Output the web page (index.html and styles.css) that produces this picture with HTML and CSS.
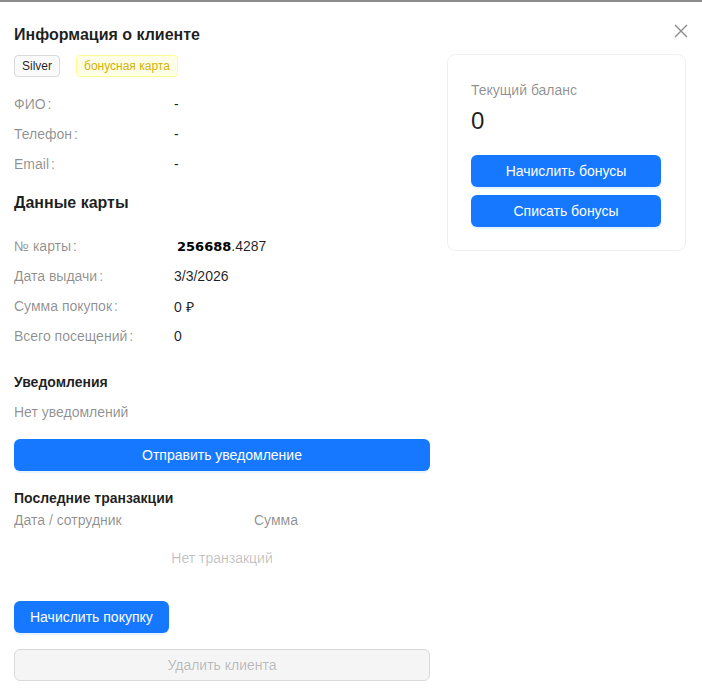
FILE: index.html
```html
<!DOCTYPE html>
<html lang="ru">
<head>
<meta charset="utf-8">
<link rel="stylesheet" href="styles.css">
</head>
<body>
<div class="modal">
  <button class="close" aria-label="close">
    <svg width="14" height="14" viewBox="0 0 14 14"><path d="M1 1L13 13M13 1L1 13" stroke="#8c8c8c" stroke-width="1.4" fill="none"/></svg>
  </button>
  <div class="layout">
    <div class="main">
      <h1 class="title">Информация о клиенте</h1>
      <div class="tags">
        <span class="tag tag-silver">Silver</span>
        <span class="tag tag-gold">бонусная карта</span>
      </div>
      <div class="rows">
        <div class="row"><span class="label">ФИО</span><span class="value">-</span></div>
        <div class="row"><span class="label">Телефон</span><span class="value">-</span></div>
        <div class="row"><span class="label">Email</span><span class="value">-</span></div>
      </div>
      <h2 class="section">Данные карты</h2>
      <div class="rows rows-card">
        <div class="row"><span class="label">№ карты</span><span class="value"><b class="cardnum">256688</b>.4287</span></div>
        <div class="row"><span class="label">Дата выдачи</span><span class="value">3/3/2026</span></div>
        <div class="row"><span class="label">Сумма покупок</span><span class="value">0 ₽</span></div>
        <div class="row"><span class="label">Всего посещений</span><span class="value">0</span></div>
      </div>
      <h3 class="sub">Уведомления</h3>
      <p class="muted">Нет уведомлений</p>
      <button class="btn btn-primary btn-block">Отправить уведомление</button>
      <h3 class="sub sub-tx">Последние транзакции</h3>
      <div class="tx-head"><span class="tx-date">Дата / сотрудник</span><span>Сумма</span></div>
      <div class="empty">Нет транзакций</div>
      <button class="btn btn-primary btn-inline">Начислить покупку</button>
      <button class="btn btn-disabled btn-block" disabled>Удалить клиента</button>
    </div>
    <aside class="card">
      <div class="card-label">Текущий баланс</div>
      <div class="balance">0</div>
      <div class="card-actions">
        <button class="btn btn-primary">Начислить бонусы</button>
        <button class="btn btn-primary">Списать бонусы</button>
      </div>
    </aside>
  </div>
</div>
</body>
</html>
```

FILE: styles.css
```css
* { box-sizing: border-box; }
html, body { margin: 0; padding: 0; background: #fff; }
body {
  font-family: "Liberation Sans", Arial, sans-serif;
  font-size: 14px;
  color: rgba(0,0,0,0.88);
  border-top: 2px solid #8c8c8c;
}
.modal { position: relative; padding: 21px 16px 0 14px; }
.close {
  position: absolute; top: 21px; right: 13px;
  width: 16px; height: 16px; padding: 0; border: 0; background: none;
  display: flex; align-items: center; justify-content: center;
}
.layout { display: flex; gap: 17px; align-items: flex-start; }
.main { width: 416px; display: flex; flex-direction: column; }
.title { margin: 0; font-size: 16px; font-weight: 700; line-height: 24px; color: rgba(0,0,0,0.88); }
.tags { display: flex; gap: 16px; margin-top: 8px; }
.tag {
  display: inline-flex; align-items: center; height: 22px; padding: 0 7px;
  font-size: 12px; border: 1px solid #d9d9d9; border-radius: 4px;
}
.tag-silver { background: #fafafa; color: rgba(0,0,0,0.88); }
.tag-gold { background: #feffe6; border-color: #fffb8f; color: #d4b106; }
.rows { display: flex; flex-direction: column; margin-top: 12px; }
.row { display: flex; height: 30px; align-items: center; }
.label { width: 160px; color: rgba(0,0,0,0.45); }
.label::after { content: ":"; margin-left: 2px; }
.value { color: rgba(0,0,0,0.88); }
.section { margin: 12px 0 0; font-size: 16px; font-weight: 700; line-height: 24px; }
.rows-card { margin-top: 16px; }
.cardnum { font-family: "DejaVu Sans", sans-serif; font-size: 13px; font-weight: 700; color: #000; margin-left: 3px; }
.sub { margin: 20px 0 0; font-size: 14px; font-weight: 700; line-height: 22px; }
.muted { margin: 8px 0 0; line-height: 22px; color: rgba(0,0,0,0.45); }
.btn {
  font-family: inherit; font-size: 14px; height: 32px; padding: 0 15px;
  border-radius: 6px; border: 1px solid transparent; cursor: pointer;
}
.btn-primary { background: #1677ff; color: #fff; box-shadow: 0 2px 0 rgba(5,145,255,0.1); }
.btn-block { width: 100%; }
.main > .btn-primary.btn-block { margin-top: 16px; }
.sub-tx { margin-top: 16px; }
.tx-head { display: flex; line-height: 22px; color: rgba(0,0,0,0.45); }
.tx-date { width: 240px; }
.empty { text-align: center; color: rgba(0,0,0,0.25); line-height: 22px; margin-top: 16px; }
.btn-inline { align-self: flex-start; margin-top: 32px; }
.btn-disabled { margin-top: 16px; background: #f5f5f5; border-color: #d9d9d9; color: rgba(0,0,0,0.25); cursor: not-allowed; }
.card {
  width: 239px; margin-top: 31px; padding: 24px 24px 23px 23px;
  border: 1px solid #f0f0f0; border-radius: 8px; background: #fff;
}
.card-label { color: rgba(0,0,0,0.45); line-height: 22px; }
.balance { font-size: 24px; line-height: 32px; margin-top: 4px; color: rgba(0,0,0,0.88); }
.card-actions { display: flex; flex-direction: column; gap: 8px; margin-top: 18px; }
.card-actions .btn { width: 100%; }
```
